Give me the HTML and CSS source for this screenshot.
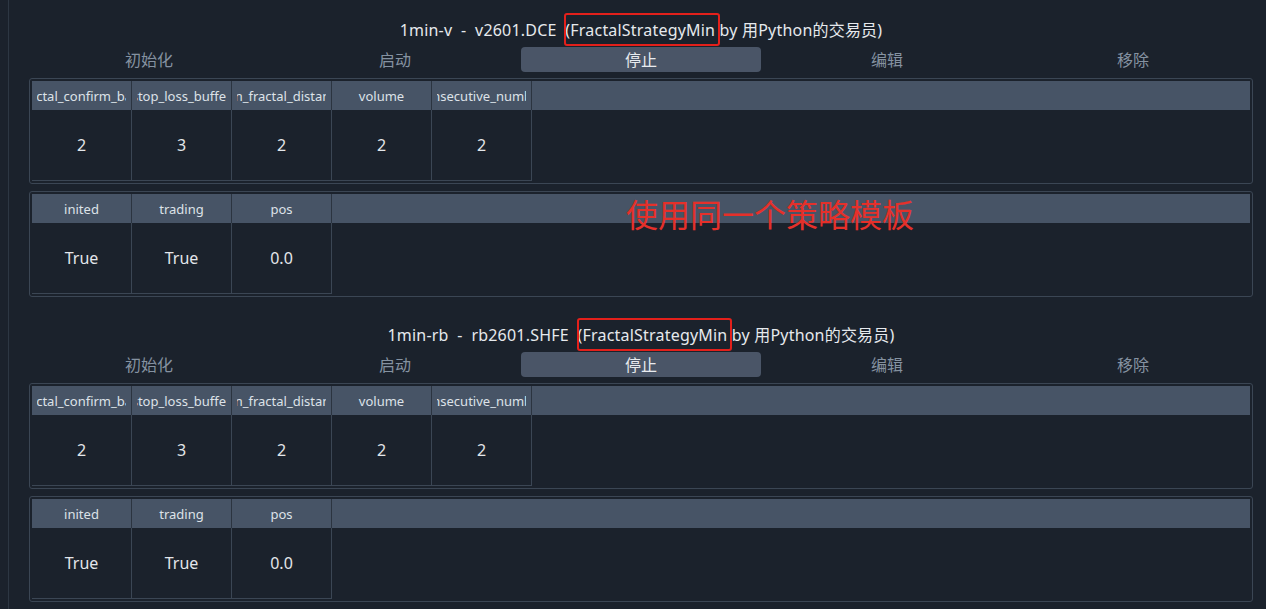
FILE: index.html
```html
<!DOCTYPE html>
<html lang="zh">
<head>
<meta charset="utf-8">
<title>CTA策略</title>
<link rel="stylesheet" href="styles.css">
</head>
<body>
<div class="page">

  <section class="strategy">
    <div class="title">1min-v  -  v2601.DCE  <span class="mark">(FractalStrategyMin</span> by 用Python的交易员)</div>
    <div class="actions">
      <div class="btn">初始化</div>
      <div class="btn">启动</div>
      <div class="btn active">停止</div>
      <div class="btn">编辑</div>
      <div class="btn">移除</div>
    </div>
    <div class="table">
      <div class="thead">
        <div class="th"><div class="clip"><span>fractal_confirm_bars</span></div></div>
        <div class="th"><div class="clip"><span>stop_loss_buffer</span></div></div>
        <div class="th"><div class="clip"><span>min_fractal_distance</span></div></div>
        <div class="th"><div class="clip"><span>volume</span></div></div>
        <div class="th"><div class="clip"><span>consecutive_number</span></div></div>
      </div>
      <div class="tbody">
        <div class="td">2</div>
        <div class="td">3</div>
        <div class="td">2</div>
        <div class="td">2</div>
        <div class="td">2</div>
      </div>
    </div>
    <div class="table">
      <div class="thead">
        <div class="th"><div class="clip"><span>inited</span></div></div>
        <div class="th"><div class="clip"><span>trading</span></div></div>
        <div class="th"><div class="clip"><span>pos</span></div></div>
      </div>
      <div class="tbody">
        <div class="td">True</div>
        <div class="td">True</div>
        <div class="td">0.0</div>
      </div>
    </div>
    <div class="note">使用同一个策略模板</div>
  </section>

  <section class="strategy">
    <div class="title">1min-rb  -  rb2601.SHFE  <span class="mark">(FractalStrategyMin</span> by 用Python的交易员)</div>
    <div class="actions">
      <div class="btn">初始化</div>
      <div class="btn">启动</div>
      <div class="btn active">停止</div>
      <div class="btn">编辑</div>
      <div class="btn">移除</div>
    </div>
    <div class="table">
      <div class="thead">
        <div class="th"><div class="clip"><span>fractal_confirm_bars</span></div></div>
        <div class="th"><div class="clip"><span>stop_loss_buffer</span></div></div>
        <div class="th"><div class="clip"><span>min_fractal_distance</span></div></div>
        <div class="th"><div class="clip"><span>volume</span></div></div>
        <div class="th"><div class="clip"><span>consecutive_number</span></div></div>
      </div>
      <div class="tbody">
        <div class="td">2</div>
        <div class="td">3</div>
        <div class="td">2</div>
        <div class="td">2</div>
        <div class="td">2</div>
      </div>
    </div>
    <div class="table">
      <div class="thead">
        <div class="th"><div class="clip"><span>inited</span></div></div>
        <div class="th"><div class="clip"><span>trading</span></div></div>
        <div class="th"><div class="clip"><span>pos</span></div></div>
      </div>
      <div class="tbody">
        <div class="td">True</div>
        <div class="td">True</div>
        <div class="td">0.0</div>
      </div>
    </div>
  </section>

</div>
</body>
</html>
```

FILE: styles.css
```css
html, body {
  margin: 0;
  padding: 0;
  height: 100%;
  overflow: hidden;
  background: #1b222c;
}

body {
  font-family: "Noto Sans", "Noto Sans CJK SC", sans-serif;
  color: #e3e6ea;
}

.page {
  margin-left: 8px;
  min-height: 100vh;
  border-left: 1px solid #2d3743;
  padding: 0 13px 0 20px;
}

.strategy {
  position: relative;
  display: flex;
  flex-direction: column;
  padding: 18px 0 8px;
}

.title {
  height: 24px;
  line-height: 24px;
  font-size: 16px;
  letter-spacing: 0.2px;
  text-align: center;
  white-space: pre;
  color: #e6e9ed;
}

.mark {
  position: relative;
}

.mark::after {
  content: "";
  position: absolute;
  top: -6px;
  bottom: -5px;
  left: -1px;
  right: -5px;
  border: 2px solid #e3201b;
  border-radius: 3px;
}

.actions {
  display: grid;
  grid-template-columns: repeat(5, 1fr);
  column-gap: 6px;
  margin-top: 5px;
  height: 25px;
}

.btn {
  display: flex;
  align-items: center;
  justify-content: center;
  font-size: 16px;
  line-height: 24px;
  color: #8592a1;
  border-radius: 4px;
}

.btn.active {
  background: #4a5567;
  color: #e8ebef;
}

.table {
  margin-top: 6px;
  border: 1px solid #3b4654;
  border-radius: 3px;
  padding: 2px;
  display: flex;
  flex-direction: column;
}

.table + .table {
  margin-top: 7px;
}

.thead {
  display: flex;
  height: 29px;
  background: #475466;
}

.th {
  border-right: 1px solid #2b3440;
  display: flex;
  align-items: center;
  padding: 0 5px;
  box-sizing: content-box;
  width: 89px;
}

.clip {
  flex: 1;
  display: flex;
  justify-content: center;
  overflow: hidden;
  font-size: 13px;
  color: #dde2e8;
  white-space: nowrap;
}

.clip span {
  flex: none;
}

.tbody {
  display: flex;
  height: 71px;
}

.td {
  width: 99px;
  height: 70px;
  border-right: 1px solid #3b4654;
  border-bottom: 1px solid #3b4654;
  display: flex;
  align-items: center;
  justify-content: center;
  font-size: 16px;
  color: #e3e6ea;
}

.note {
  position: absolute;
  left: 597px;
  top: 193px;
  font-family: "Noto Sans CJK SC", sans-serif;
  font-size: 32px;
  line-height: 40px;
  color: #e5302a;
}
```
